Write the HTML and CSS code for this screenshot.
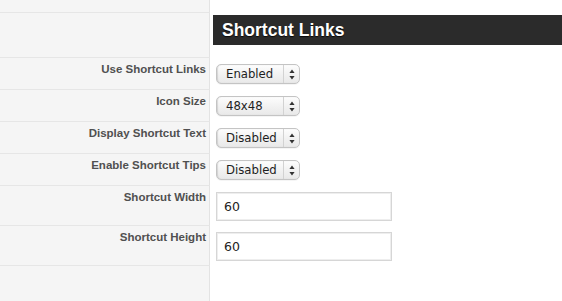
FILE: index.html
```html
<!DOCTYPE html>
<html lang="en">
<head>
    <meta charset="UTF-8">
    <title>Shortcut Links</title>
    <link rel="stylesheet" href="styles.css">
</head>
<body>
    <div class="settings">
        <div class="row row-top">
            <div class="label"></div>
            <div class="field"></div>
        </div>
        <div class="row row-head">
            <div class="label"></div>
            <div class="field"><h2 class="section-title">Shortcut Links</h2></div>
        </div>
        <div class="row">
            <div class="label">Use Shortcut Links</div>
            <div class="field">
                <div class="select"><span class="select-value">Enabled</span><span class="select-arrows"><svg width="6" height="11" viewBox="0 0 6 11"><path d="M3 0.5L5.6 4H0.4z M3 10.5L5.6 7H0.4z" fill="#333"/></svg></span></div>
            </div>
        </div>
        <div class="row">
            <div class="label">Icon Size</div>
            <div class="field">
                <div class="select"><span class="select-value">48x48</span><span class="select-arrows"><svg width="6" height="11" viewBox="0 0 6 11"><path d="M3 0.5L5.6 4H0.4z M3 10.5L5.6 7H0.4z" fill="#333"/></svg></span></div>
            </div>
        </div>
        <div class="row">
            <div class="label">Display Shortcut Text</div>
            <div class="field">
                <div class="select"><span class="select-value">Disabled</span><span class="select-arrows"><svg width="6" height="11" viewBox="0 0 6 11"><path d="M3 0.5L5.6 4H0.4z M3 10.5L5.6 7H0.4z" fill="#333"/></svg></span></div>
            </div>
        </div>
        <div class="row">
            <div class="label">Enable Shortcut Tips</div>
            <div class="field">
                <div class="select"><span class="select-value">Disabled</span><span class="select-arrows"><svg width="6" height="11" viewBox="0 0 6 11"><path d="M3 0.5L5.6 4H0.4z M3 10.5L5.6 7H0.4z" fill="#333"/></svg></span></div>
            </div>
        </div>
        <div class="row row-input">
            <div class="label">Shortcut Width</div>
            <div class="field"><input type="text" class="text-input" value="60"></div>
        </div>
        <div class="row row-input">
            <div class="label">Shortcut Height</div>
            <div class="field"><input type="text" class="text-input" value="60"></div>
        </div>
        <div class="row row-last">
            <div class="label"></div>
            <div class="field"></div>
        </div>
    </div>
</body>
</html>
```

FILE: styles.css
```css
body {
    margin: 0;
    background: #fff;
    font-family: 'Liberation Sans', Arial, sans-serif;
}
.settings {
    display: flex;
    flex-direction: column;
    min-height: 301px;
}
.row {
    display: grid;
    grid-template-columns: 210px 1fr;
    height: 32px;
}
.row-top {
    height: 13px;
}
.row-head {
    height: 45px;
}
.row-input {
    height: 40px;
}
.row-input:last-of-type {
    height: 41px;
}
.row-last {
    flex: 1;
}
.label {
    background: #f5f5f5;
    border-right: 1px solid #e3e3e3;
    border-bottom: 1px solid #e6e6e6;
    padding: 4px 3px 0 0;
    text-align: right;
    font-size: 11.5px;
    line-height: 14px;
    font-weight: bold;
    color: #505050;
}
.row-last .label {
    border-bottom: none;
}
.field {
    padding: 6px 0 0 6px;
}
.row-top .field {
    padding: 0;
}
.row-head .field {
    padding: 2px 0 0 3px;
}
.section-title {
    margin: 0;
    height: 30px;
    line-height: 31px;
    padding-left: 9px;
    background: #2b2b2b;
    color: #fff;
    font-size: 17.5px;
    font-weight: bold;
    text-shadow: 0 1px 1px rgba(0, 0, 0, 0.8);
}
.select {
    display: flex;
    width: 84px;
    height: 20px;
    box-sizing: border-box;
    border: 1px solid #c4c4c4;
    border-radius: 5px;
    background: linear-gradient(#fdfdfd, #f1f1f1 55%, #e9e9e9);
    box-shadow: inset 1px 0 1px rgba(0, 0, 0, 0.12), 0 1px 0 rgba(0, 0, 0, 0.04);
    font-family: 'DejaVu Sans', sans-serif;
    font-size: 11.7px;
    line-height: 18px;
    color: #1e1e1e;
}
.select-value {
    flex: 1;
    padding-left: 9px;
    border-right: 1px solid #d2d2d2;
}
.select-arrows {
    width: 15px;
    display: flex;
    align-items: center;
    justify-content: center;
}
.text-input {
    display: block;
    width: 176px;
    height: 29px;
    box-sizing: border-box;
    margin: 0;
    padding: 0 0 0 7px;
    border: 1px solid #d6d6d6;
    box-shadow: inset 0 0 0 1px #eeeeee;
    border-radius: 0;
    background: #fff;
    font-family: 'DejaVu Sans', sans-serif;
    font-size: 12.5px;
    color: #222;
    outline: none;
}
```
